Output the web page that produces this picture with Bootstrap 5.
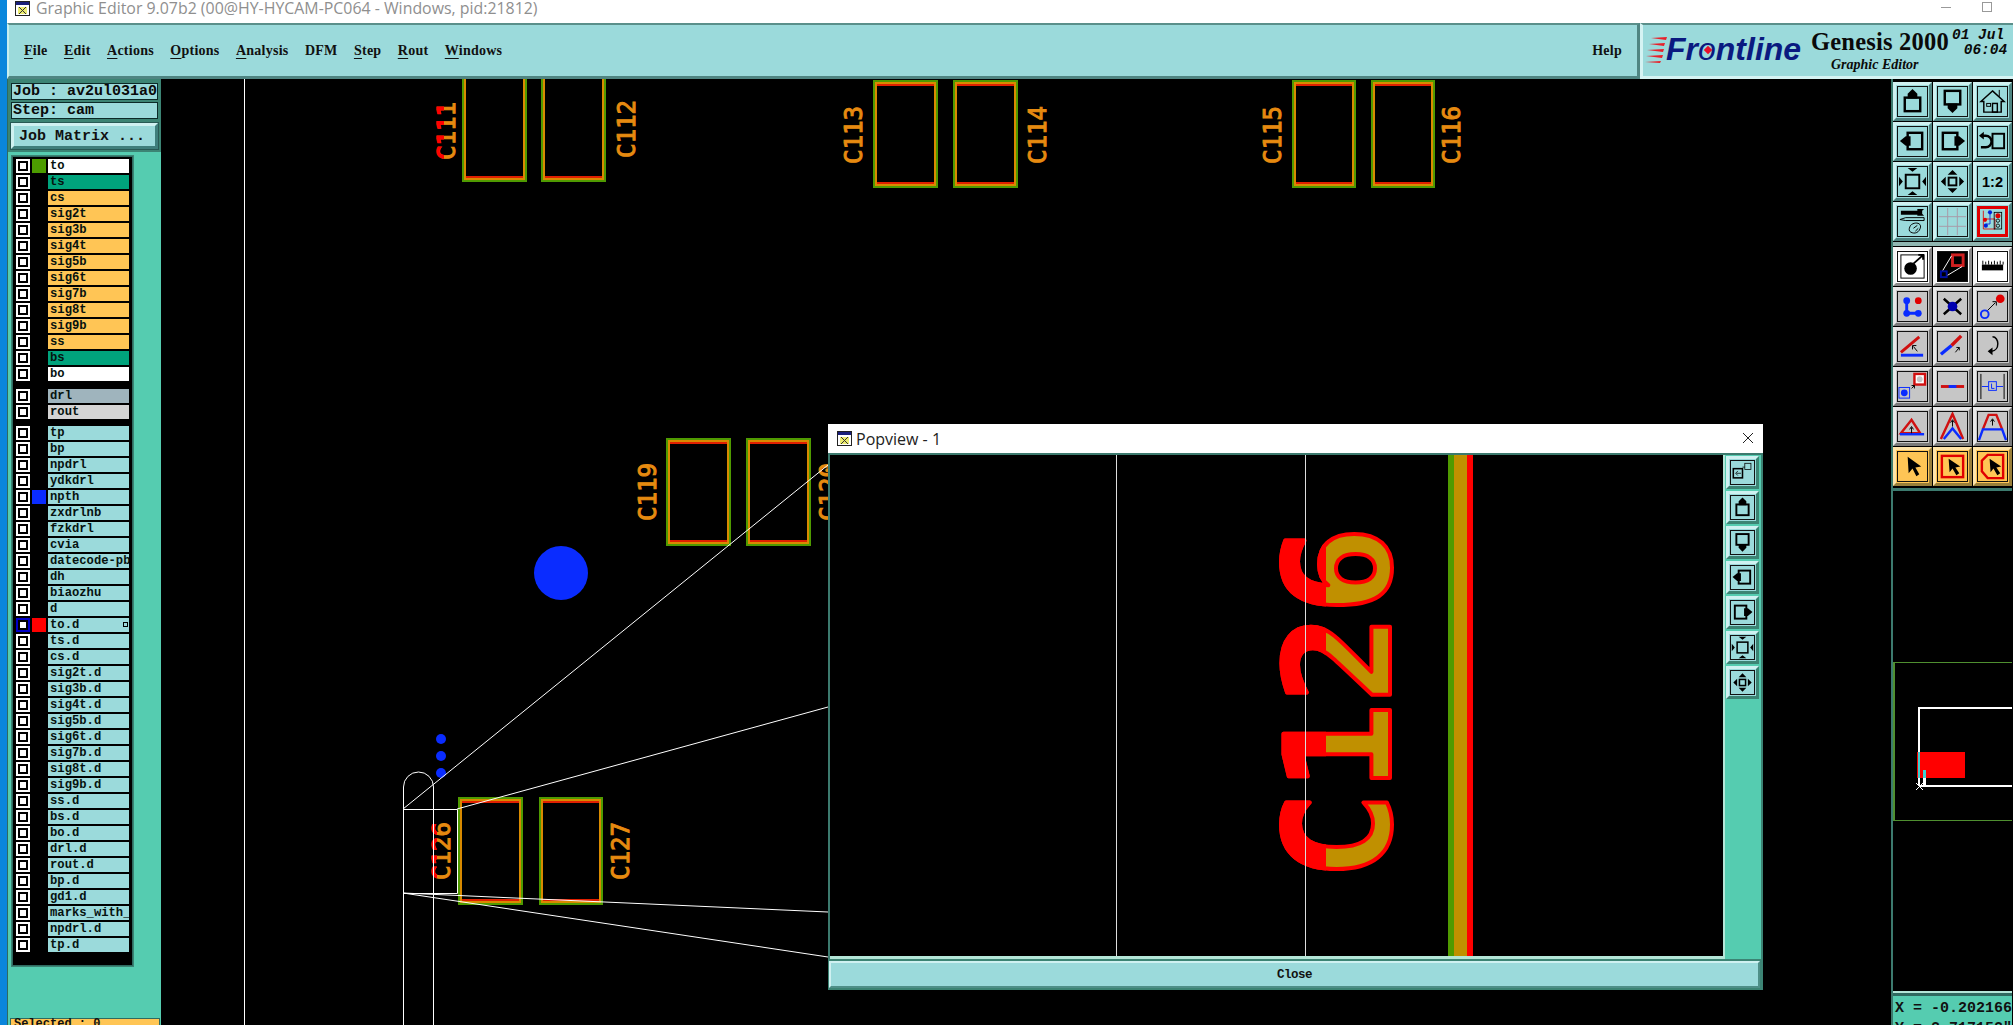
<!DOCTYPE html>
<html lang="en">
<head>
  <meta charset="UTF-8" />
  <meta name="viewport" content="width=device-width, initial-scale=1.0"/>
  <title>Graphic Editor</title>
  <link href="https://cdn.jsdelivr.net/npm/bootstrap@5.3.3/dist/css/bootstrap.min.css" rel="stylesheet">
  <style>
    html, body { margin: 0; height: 1025px; overflow: hidden; background: #000; }
    .app-root { height: 1025px; width: 2013px; overflow: hidden; }
    .desk-strip { width: 7px; background: #0a86dc; flex: none; }
    .app-main { width: 2006px; }

    .win-title { height: 23px; padding-bottom: 6px; background: #fff; color: #8f8f8f; font: 15.9px/17px "Open Sans", sans-serif; flex: none; overflow: hidden; }
    .win-title .title-icon { margin: 0 6px 0 8px; }
    .win-min { position: absolute; left: 1934px; top: 7px; width: 10px; height: 1px; background: #999; }
    .win-max { position: absolute; left: 1975px; top: 2px; width: 10px; height: 10px; border: 1px solid #999; }

    .top-bar { height: 56px; background: #9bdadb; flex: none; }
    .menu-strip { width: 1633px; padding: 0 15px; border-top: 2px solid #5a8f8a; border-left: 2px solid #c8eeee; border-bottom: 3px solid #4f8582; border-right: 3px solid #4f8582; font: bold 14px "Liberation Serif", serif; color: #111; letter-spacing: .25px; }
    .menu-list { gap: 16.4px; }
    .menu-list u { text-underline-offset: 3px; text-decoration-thickness: 1px; }
    .brand-strip { width: 373px; border-top: 2px solid #5a8f8a; border-left: 3px solid #d5f3f3; border-bottom: 3px solid #d5f3f3; }
    .brand-front { left: 23px; top: 6px; font: italic bold 32px "Liberation Sans", sans-serif; color: #0a1a80; }
    .brand-front .ring-o { position: relative; font-weight: normal; }
    .brand-front .ring-o::after { content: ""; position: absolute; left: 7px; top: 16px; width: 6px; height: 6px; background: #e8102a; transform: rotate(45deg); }
    .brand-lines { left: 2px; top: 12px; }
    .brand-name { left: 168px; top: 3px; font: bold 24.5px "Liberation Serif", serif; color: #0a0a0a; white-space: nowrap; letter-spacing: .2px; }
    .brand-sub { left: 188px; top: 32px; font: italic bold 14px "Liberation Serif", serif; color: #0a0a0a; white-space: nowrap; }
    .brand-date { left: 309px; top: 3px; font: italic bold 14.5px "Liberation Mono", monospace; color: #0a0a0a; line-height: 15px; white-space: pre; }
    .brand-date span { padding-left: 3px; }

    .side-panel { width: 154px; background: #55ccb0; flex: none; border-left: 1px solid #2f6a60; }
    .job-box { background: #3c8474; padding: 4px 3px 3px; flex: none; }
    .job-line { height: 17px; margin-bottom: 2px; background: #9bdadb; border: 1px solid #0c2a28; font: bold 15px/15px "Liberation Mono", monospace; color: #0a0a0a; padding-left: 1px; white-space: nowrap; overflow: hidden; }
    .job-btn { height: 26px; margin-top: 2px; width: 100%; padding: 0 0 0 5px; background: #9bdadb; text-align: left; font: bold 15px "Liberation Mono", monospace; color: #111; border-radius: 0; border: 3px solid; border-color: #cff1f1 #3f7f7c #3f7f7c #cff1f1; box-shadow: 0 0 0 1px #285a55; }
    .layer-area { height: 863px; flex: none; }
    .layer-frame { margin: 4px 0 0 4px; width: 121px; height: 810px; background: #000; border: 1px solid #2f6a60; box-shadow: 0 0 0 1px #3c8474; flex: none; }
    .layer-group { background: #000; padding: 2px 3px 0 3px; }
    .layer-group + .layer-group { margin-top: 4px; }
    .layer-group.tight { margin-top: 3px !important; }
    .layer-item { height: 16px; gap: 2px; }
    .layer-chk { width: 14px; height: 14px; background: #fff; padding: 2px; flex: none; }
    .layer-chk i { display: block; width: 10px; height: 10px; border: 2px solid #000; background: #fff; }
    .layer-chk.on { background: #0000c8; }
    .layer-swatch { width: 14px; height: 14px; flex: none; }
    .layer-name { width: 81px; height: 14px; font: bold 12.2px/14px "Liberation Mono", monospace; padding-left: 2px; color: #06120f; overflow: hidden; white-space: nowrap; position: relative; }
    .layer-mark { position: absolute; right: 1px; top: 4px; width: 5px; height: 5px; border: 1px solid #000; }
    .selected-bar { height: 30px; margin: 3px 1px 0 2px; background: #ffc555; border: 1px solid #2f6a60; font: bold 12px "Liberation Mono", monospace; color: #111; padding-left: 3px; line-height: 11px; white-space: nowrap; }

    .draw-area { width: 1730px; background: #000; position: relative; flex: none; }
    .draw-area > svg { position: absolute; inset: 0; }
    .pcb-label { font-family: "DejaVu Sans Mono", monospace; font-size: 24px; }

    .popview { position: absolute; left: 667px; top: 345px; width: 935px; height: 566px; background: #3c8474; }
    .pop-title { height: 29px; background: #fff; font: 16px "Open Sans", sans-serif; color: #222; padding-left: 9px; flex: none; }
    .pop-title .pop-x { position: absolute; right: 9px; top: 8px; }
    .pop-body { height: 506px; flex: none; border-top: 2px solid #3c7a6e; border-left: 2px solid #3c7a6e; }
    .pop-view { width: 893px; height: 504px; background: #000; border-bottom: 3px solid #b4e6d8; flex: none; }
    .pop-side { width: 38px; background: #55ccb0; border-left: 2px solid #b4e6d8; padding: 1px 0 0 1px; height: 504px; gap: 2px; }
    .pop-close { height: 27px; margin: 2px 1px 0 1px; width: 931px; background: #9bdadb; border-radius: 0; padding: 0; font: bold 12.5px "Liberation Mono", monospace; letter-spacing: -.5px; color: #111; border: 2px solid; border-color: #cff1f1 #4f8f88 #4f8f88 #cff1f1; box-shadow: 0 0 0 1px #3c8474; }

    .tool-panel { width: 121px; background: #000; flex: none; border-left: 2px solid #3c7a6e; position: relative; }
    .tool-grid { display: grid; grid-template-columns: repeat(3, 39px); gap: 1px; }
    .tool-grid.first { padding-top: 3px; }
    .tool-sep { height: 4px; background: #8fb5b0; margin: 1px 0 1px; }
    .tool-end { height: 3px; background: #3c7a6e; margin-top: 2px; }
    .tool-cell { width: 39px; height: 39px; border: 3px solid; border-color: #cff1f1 #4f8582 #4f8582 #cff1f1; background: #9bdadb; padding: 1px; }
    .tool-cell.gray { background: #c6c6c6; border-color: #e8e8e8 #7a7a7a #7a7a7a #e8e8e8; }
    .tool-cell.plain { background: #fff; border-color: #f4f4f4 #8a8a8a #8a8a8a #f4f4f4; }
    .tool-cell.gold { background: #ffc555; border-color: #ffe4a8 #9a7f3a #9a7f3a #ffe4a8; }
    .tool-cell.small { width: 33px; height: 33px; border-color: #cff1f1 #3c8474 #3c8474 #cff1f1; }
    .tool-cell svg { display: block; width: 100%; height: 100%; border: 1px solid #111; }
    .tool-cell.dark svg { background: #000; }
    .tool-cell.framed svg { border: 3px solid #e00000; }
    .mini-map { position: absolute; left: 0; top: 583px; width: 119px; height: 159px; border-top: 1px solid #4f8f30; border-bottom: 1px solid #4f8f30; border-left: 2px solid #4f8f30; }
    .coord-box { position: absolute; left: 0; top: 914px; width: 119px; height: 40px; background: #55ccb0; border-top: 3px solid #2f6a60; box-shadow: 0 -2px 0 #b4e6d8; font: bold 15px/20px "Liberation Mono", monospace; color: #111; padding: 3px 0 0 2px; white-space: pre; overflow: hidden; }
  </style>
</head>
<body>
  <div class="app-root d-flex">
    <div class="desk-strip"></div>
    <div class="app-main d-flex flex-column">
      <div class="win-title d-flex align-items-center position-relative">
        <svg class="title-icon" width="15" height="15" viewBox="0 0 15 15"><rect x=".5" y=".5" width="14" height="14" fill="#fff" stroke="#222"/><rect x="1" y="1" width="13" height="3" fill="#1a1f7a"/><rect x="3" y="6" width="9" height="7" fill="#ecec70"/><path d="M4 6l7 7M11 6l-7 7" stroke="#333"/></svg>
        <span>Graphic Editor 9.07b2 (00@HY-HYCAM-PC064 - Windows, pid:21812)</span>
        <div class="win-min"></div>
        <div class="win-max"></div>
      </div>

      <div class="top-bar d-flex">
        <div class="menu-strip d-flex align-items-center justify-content-between">
          <div class="menu-list d-flex">
            <span><u>F</u>ile</span><span><u>E</u>dit</span><span><u>A</u>ctions</span><span><u>O</u>ptions</span><span><u>A</u>nalysis</span><span>DFM</span><span><u>S</u>tep</span><span><u>R</u>out</span><span><u>W</u>indows</span>
          </div>
          <span>Help</span>
        </div>
        <div class="brand-strip position-relative">
          <svg class="brand-lines position-absolute" width="24" height="26" viewBox="0 0 24 26"><path d="M6 1L22 0l-1 3zM4 7l16-1-1 3zM2 13l17-1-1 3zM1 19l17-1-1 3zM0 25l16-1-1 2z" fill="#e8202a"/></svg>
          <div class="brand-front position-absolute">Fr<span class="ring-o">o</span>ntline</div>
          <div class="brand-name position-absolute">Genesis 2000</div>
          <div class="brand-sub position-absolute">Graphic Editor</div>
          <div class="brand-date position-absolute">01 Jul
 <span>06:04</span></div>
        </div>
      </div>

      <div class="d-flex flex-grow-1">
        <div class="side-panel d-flex flex-column">
          <div class="job-box">
            <div class="job-line">Job : av2ul031a0</div>
            <div class="job-line">Step: cam</div>
            <button class="btn job-btn">Job Matrix ...</button>
          </div>
          <div class="layer-area">
            <div class="layer-frame d-flex flex-column">
              <div class="layer-group" id="layersA"></div>
              <div class="layer-group" id="layersB"></div>
              <div class="layer-group tight flex-grow-1" id="layersC"></div>
            </div>
          </div>
          <div class="selected-bar">Selected : 0</div>
        </div>

        <div class="draw-area">
          <svg id="pcb" width="1730" height="946" viewBox="162 79 1730 946"></svg>

          <div class="popview d-flex flex-column">
            <div class="pop-title d-flex align-items-center gap-1 position-relative">
              <svg width="15" height="15" viewBox="0 0 15 15"><rect x=".5" y=".5" width="14" height="14" fill="#fff" stroke="#222"/><rect x="1" y="1" width="13" height="3" fill="#1a1f7a"/><rect x="3" y="6" width="9" height="7" fill="#ecec70"/><path d="M4 6l7 7M11 6l-7 7" stroke="#333"/></svg>
              <span>Popview - 1</span>
              <svg class="pop-x" width="12" height="12" viewBox="0 0 12 12"><path d="M1 1l10 10M11 1L1 11" stroke="#222" stroke-width="1"/></svg>
            </div>
            <div class="pop-body d-flex">
              <div class="pop-view">
                <svg width="893" height="501" viewBox="830 457 893 501">
                  <defs><clipPath id="topPart"><rect x="1270" y="500" width="56" height="400"/></clipPath></defs>
                  <path d="M1116.500 457V958" stroke="#ddd" stroke-width="1"/>
                  <rect x="1448" y="457" width="6" height="501" fill="#4f9a00"/>
                  <rect x="1454" y="457" width="13" height="501" fill="#c09000"/>
                  <rect x="1467" y="457" width="6" height="501" fill="#f00"/>
                  <g font-family="DejaVu Sans Mono" font-weight="bold" font-size="146" stroke-width="4" stroke-linejoin="round">
                    <text transform="translate(1390,882) rotate(-90)" textLength="354" lengthAdjust="spacingAndGlyphs" fill="#c09000" stroke="#f00">C126</text>
                    <g clip-path="url(#topPart)"><text transform="translate(1390,882) rotate(-90)" textLength="354" lengthAdjust="spacingAndGlyphs" fill="#f00" stroke="#f00">C126</text></g>
                  </g>
                  <path d="M1305.500 457V958" stroke="#ddd" stroke-width="1"/>
                </svg>
              </div>
              <div class="pop-side d-flex flex-column" id="popTools"></div>
            </div>
            <button class="btn pop-close">Close</button>
          </div>
        </div>

        <div class="tool-panel">
          <div class="tool-grid first" id="toolsA"></div>
          <div class="tool-sep"></div>
          <div class="tool-grid" id="toolsB"></div>
          <div class="tool-end"></div>
          <div class="mini-map">
            <svg width="117" height="157" viewBox="1895 663 117 157">
              <path d="M1919 786V708H2013M1919 786H2013" fill="none" stroke="#fff" stroke-width="2"/>
              <rect x="1917" y="752" width="48" height="26" fill="#f00"/>
              <rect x="1918" y="752" width="2" height="26" fill="#40d0d0"/>
              <rect x="1923" y="770" width="3" height="8" fill="#40d0d0"/>
              <rect x="1923" y="778" width="3" height="8" fill="#fff"/>
              <rect x="1918" y="778" width="2" height="8" fill="#fff"/>
              <path d="M1916 783l7 7M1923 783l-7 7" stroke="#fff"/>
            </svg>
          </div>
          <div class="coord-box">X = -0.202166
Y = 2.717152"</div>
        </div>
      </div>
    </div>
  </div>

  <script>
    // layers: name, row colour, swatch colour
    const YEL = '#ffc555', GRN = '#00a37c', WHT = '#fff', CY = '#9bdadb';
    const groupA = [['to', WHT, '#4c9c00'], ['ts', GRN], ['cs', YEL], ['sig2t', YEL], ['sig3b', YEL], ['sig4t', YEL], ['sig5b', YEL], ['sig6t', YEL], ['sig7b', YEL], ['sig8t', YEL], ['sig9b', YEL], ['ss', YEL], ['bs', GRN], ['bo', WHT]];
    const groupB = [['drl', '#9fb4bd'], ['rout', '#d4d4d4']];
    const groupC = ['tp', 'bp', 'npdrl', 'ydkdrl', 'npth', 'zxdrlnb', 'fzkdrl', 'cvia', 'datecode-pbe', 'dh', 'biaozhu', 'd', 'to.d', 'ts.d', 'cs.d', 'sig2t.d', 'sig3b.d', 'sig4t.d', 'sig5b.d', 'sig6t.d', 'sig7b.d', 'sig8t.d', 'sig9b.d', 'ss.d', 'bs.d', 'bo.d', 'drl.d', 'rout.d', 'bp.d', 'gd1.d', 'marks_with_dc', 'npdrl.d', 'tp.d'].map(n => {
      if (n === 'npth') return [n, CY, '#0a2cff'];
      if (n === 'to.d') return [n, CY, '#f00', true];
      return [n, CY];
    });

    function fillLayers(id, list) {
      document.getElementById(id).innerHTML = list.map(l => `
        <div class="layer-item d-flex">
          <div class="layer-chk ${l[3] ? 'on' : ''}"><i></i></div>
          <div class="layer-swatch" ${l[2] ? `style="background:${l[2]}"` : ''}></div>
          <div class="layer-name" style="background:${l[1]}">${l[0]}${l[3] ? '<span class="layer-mark"></span>' : ''}</div>
        </div>`).join('');
    }
    fillLayers('layersA', groupA);
    fillLayers('layersB', groupB);
    fillLayers('layersC', groupC);

    // toolbar icons, 30x30 box
    const box = (x, y, w, h, s = 2.5) => `<rect x="${x}" y="${y}" width="${w}" height="${h}" fill="none" stroke="#000" stroke-width="${s}"/>`;
    const icons = {
      up: box(7, 11, 16, 14) + '<path d="M15 2l5 5v5H10V7z"/>',
      down: box(7, 4, 16, 14) + '<path d="M15 27l-5-5v-5h10v5z"/>',
      home: '<path d="M15 4L27 15h-3v11H6V15H3z" fill="none" stroke="#000" stroke-width="1.500"/><path d="M22 3v7" stroke="#000"/>' + box(9, 17, 4, 3, 1) + box(15, 17, 5, 9, 1.5),
      left: box(10, 6, 15, 17) + '<path d="M2 14.500l6-5h5v10H8z"/>',
      right: box(5, 6, 15, 17) + '<path d="M28 14.500l-6-5h-5v10h5z"/>',
      undo: box(15, 7, 12, 15, 2) + '<path d="M5 9h3a5 5 0 0 1 0 12H3" fill="none" stroke="#000" stroke-width="2.500"/><path d="M1 9l5-4v8z"/>',
      fit: box(8, 8, 14, 14, 2) + '<path d="M10 1h10l-5 4zM10 29h10l-5-4zM1 10v10l4-5zM29 10v10l-4-5z"/>',
      zoom: box(11, 11, 8, 8, 2) + '<path d="M15 3l5 5H10zM15 27l5-5H10zM3 15l5-5v10zM27 15l-5-5v10z"/>',
      ratio: '<text x="15" y="21" text-anchor="middle" font-family="Liberation Sans" font-weight="bold" font-size="15">1:2</text>',
      tools: '<path d="M3 5h18M3 7h18" stroke="#000" stroke-width="2"/><path d="M20 2h7l-2 2v3l2 2h-7z"/><path d="M2 13l6-2h19v3H8z" fill="none" stroke="#000"/><path d="M13 19c4-4 12-3 10 3s-8 6-11 3c-1-2 0-4 1-6z" fill="none" stroke="#000"/><path d="M16 22l4-3M18 25l3-3" stroke="#000"/>',
      grid: '<path d="M10 1v28M20 1v28M1 10h28M1 20h28" stroke="#a89aa8"/>',
      circuit: '<path d="M4 2v22h14V12H5" fill="none" stroke="#e00000" stroke-width="1"/><path d="M12 3v15H7" fill="none" stroke="#0022dd"/><circle cx="12" cy="4" r="2.500" fill="#0022dd"/><circle cx="6" cy="13" r="2.500" fill="#e00000"/><circle cx="7" cy="20" r="2.500" fill="#0022dd"/>' + box(17, 4, 9, 20, 1) + '<circle cx="21.500" cy="8" r="3" fill="#e00000"/><circle cx="21.500" cy="14" r="2" fill="none" stroke="#000"/><circle cx="21.500" cy="20" r="2" fill="none" stroke="#000"/>',
      select: box(3, 3, 24, 24, 1) + '<circle cx="13" cy="17" r="6.500"/><path d="M16 12L25 4M21 3h5v5" stroke="#000" fill="none" stroke-width="2"/>',
      mask: '<rect x="15" y="3" width="11" height="11" fill="none" stroke="#d02020" stroke-width="3"/><rect x="3" y="20" width="6" height="6" fill="none" stroke="#0010a0" stroke-width="2"/><path d="M5 19L14 4M10 24L25 15" stroke="#fff"/>',
      ruler: '<path d="M4 13h22v6H4z"/><path d="M5 9v4M8 10v3M11 9v4M14 10v3M17 9v4M20 10v3M23 9v4M26 10v3" stroke="#000"/>',
      snap: '<circle cx="9" cy="9" r="3.500" fill="#0a2cff"/><circle cx="21" cy="9" r="3.500" fill="#e00000"/><circle cx="9" cy="22" r="3.500" fill="#0a2cff"/><circle cx="21" cy="22" r="3.500" fill="#0a2cff"/><path d="M9 9v13h12" stroke="#0a2cff" stroke-width="3" fill="none"/>',
      cross: '<path d="M6 7l18 16M24 7L6 23" stroke="#000" stroke-width="2.500"/><circle cx="15" cy="15" r="5" fill="#0000b0"/>',
      route: '<circle cx="23" cy="7" r="4.500" fill="#e00000"/><circle cx="7" cy="23" r="4" fill="none" stroke="#0a2cff" stroke-width="2"/><path d="M10 19l8-8M15 10h4v4" stroke="#000" fill="none"/>',
      slant: '<path d="M3 21L22 5" stroke="#d01010" stroke-width="3"/><path d="M3 24h23" stroke="#0a2cff" stroke-width="3"/><path d="M20 20l-4-5M15 18v-4h4" stroke="#000" fill="none"/>',
      slash: '<path d="M3 23L14 14" stroke="#0a2cff" stroke-width="3.500"/><path d="M14 14L24 4" stroke="#d01010" stroke-width="3.500"/><path d="M18 21l4-5M19 16h3v3" stroke="#000" fill="none"/>',
      curl: '<path d="M15 5c7 0 8 14-1 15" fill="none" stroke="#000" stroke-width="1.500"/><path d="M10 20l5-4v8z"/>',
      pads: '<rect x="1" y="16" width="11" height="11" fill="none" stroke="#0a2cff"/><circle cx="6.500" cy="21.500" r="3.500" fill="#0a2cff"/><rect x="17" y="2" width="11" height="11" fill="#fff" stroke="#d01010" stroke-width="2.500"/><circle cx="22.500" cy="7.500" r="3" fill="#c6c6c6"/><path d="M14 17l3-3M14 14h3v3" stroke="#000" fill="none"/>',
      join: '<path d="M3 15h24" stroke="#d01010" stroke-width="3"/><path d="M11 15h8" stroke="#0a2cff" stroke-width="3"/>',
      width: '<path d="M3 2v26M27 2v26" stroke="#000"/><rect x="11" y="10" width="8" height="9" fill="none" stroke="#0a2cff"/><path d="M4 15h7M19 15h7" stroke="#0a2cff"/><path d="M14 12v5h3" stroke="#0a2cff" fill="none"/>',
      tri: '<path d="M3 22L14 8l9 14z" fill="none" stroke="#d01010" stroke-width="2.500"/><path d="M2 23h25" stroke="#0a2cff" stroke-width="2.500"/><path d="M14 22v-6M12 18l2-3 2 3" stroke="#000" fill="none"/>',
      peak: '<path d="M3 28L15 2l11 26" fill="none" stroke="#d01010" stroke-width="2.500"/><path d="M6 28l9-11 9 11" fill="none" stroke="#0a2cff" stroke-width="2.500"/><path d="M15 15V9M13 11l2-3 2 3" stroke="#000" fill="none"/>',
      arch: '<path d="M5 18L11 3h8l6 15" fill="none" stroke="#d01010" stroke-width="2.500"/><path d="M1 29l4-11h20l4 11" fill="none" stroke="#0a2cff" stroke-width="2.500"/><path d="M15 14V8M13 10l2-3 2 3" stroke="#000" fill="none"/>',
      arrow: '<path d="M10 5l1 17 4-5 4 8 3-2-4-7 6-1z"/>',
      arrowBox: '<rect x="4" y="4" width="22" height="22" fill="none" stroke="#e00000" stroke-width="2.500"/><path d="M11 7l1 14 3-4 4 7 3-2-4-6 5-1z"/>',
      arrowOct: '<path d="M10 3h16v24H10L4 20V9z" fill="none" stroke="#e00000" stroke-width="2.500"/><path d="M12 7l1 14 3-4 4 7 3-2-4-6 5-1z"/>',
      popOut: box(3, 10, 12, 12, 2) + box(18, 3, 8, 8, 1) + '<path d="M13 16H7M9 13l-3 3 3 3" stroke="#000" fill="none"/><path d="M15 8h3" stroke="#000"/>'
    };

    const tool = (name, kind = '', extra = '') =>
      `<div class="tool-cell ${kind} ${extra}"><svg viewBox="0 0 30 30">${icons[name]}</svg></div>`;

    document.getElementById('toolsA').innerHTML =
      ['up', 'down', 'home', 'left', 'right', 'undo', 'fit', 'zoom', 'ratio', 'tools', 'grid'].map(n => tool(n)).join('') + tool('circuit', '', 'framed');
    document.getElementById('toolsB').innerHTML =
      tool('select', 'plain') + tool('mask', 'plain', 'dark') + tool('ruler', 'plain') +
      ['snap', 'cross', 'route', 'slant', 'slash', 'curl', 'pads', 'join', 'width', 'tri', 'peak', 'arch'].map(n => tool(n, 'gray')).join('') +
      ['arrow', 'arrowBox', 'arrowOct'].map(n => tool(n, 'gold')).join('');
    document.getElementById('popTools').innerHTML =
      ['popOut', 'up', 'down', 'left', 'right', 'fit', 'zoom'].map(n => tool(n, 'small')).join('');

    // board drawing, page coordinates
    const pads = [[463, 70, 65, 112], [542, 70, 65, 112], [874, 80, 65, 108], [954, 80, 65, 108], [1293, 80, 64, 108], [1372, 80, 64, 108], [667, 438, 65, 108], [747, 438, 65, 108], [459, 797, 65, 108], [540, 797, 64, 108]];
    // name, baseline x, start y, clip for the red tops
    const labels = [['C111', 456, 160, 'redTop'], ['C112', 636, 158], ['C113', 863, 164], ['C114', 1047, 164], ['C115', 1282, 164], ['C116', 1461, 164], ['C119', 657, 521], ['C120', 838, 521], ['C126', 451, 880, 'redTip'], ['C127', 630, 880]];

    let svg = '<defs><clipPath id="redTip"><rect x="425" y="800" width="13" height="90"/></clipPath><clipPath id="redTop"><rect x="430" y="90" width="15" height="80"/></clipPath></defs>';
    pads.forEach(p => {
      svg += `<rect x="${p[0] + 1}" y="${p[1] + 1}" width="${p[2] - 2}" height="${p[3] - 2}" fill="none" stroke="#4f9a00" stroke-width="2"/>`;
      svg += `<rect x="${p[0] + 3}" y="${p[1] + 3}" width="${p[2] - 6}" height="${p[3] - 6}" fill="none" stroke="#d88a00" stroke-width="2"/>`;
      svg += `<path d="M${p[0] + 4} ${p[1] + 5}h${p[2] - 8}M${p[0] + 4} ${p[1] + p[3] - 5}h${p[2] - 8}" stroke="#e02000" stroke-width="2"/>`;
    });
    labels.forEach(l => {
      const t = `transform="translate(${l[1]},${l[2]}) rotate(-90)" textLength="58" lengthAdjust="spacingAndGlyphs"`;
      svg += `<text class="pcb-label" ${t} fill="#e68a10" stroke="#e68a10" stroke-width="1">${l[0]}</text>`;
      if (l[3]) svg += `<g clip-path="url(#${l[3]})"><text class="pcb-label" ${t} fill="#f00" stroke="#f00" stroke-width="1.500">${l[0]}</text></g>`;
    });
    svg += '<circle cx="562" cy="573" r="27" fill="#0a2cff"/>';
    [739, 756, 773].forEach(y => { svg += `<circle cx="442" cy="${y}" r="5" fill="#0a2cff"/>`; });
    svg += '<path d="M245.500 79V1025" stroke="#fff" stroke-width="1"/>';
    svg += '<path d="M404.500 1025V787a15 15 0 0 1 30 0V1025M404 809.500H458.500V893.500H404M404 809L829 465M458 809L829 707M404 893L829 912M404 893L829 957" fill="none" stroke="#fff" stroke-width="1"/>';
    document.getElementById('pcb').innerHTML = svg;
  </script>
  <script src="https://cdn.jsdelivr.net/npm/bootstrap@5.3.3/dist/js/bootstrap.bundle.min.js"></script>
</body>
</html>
